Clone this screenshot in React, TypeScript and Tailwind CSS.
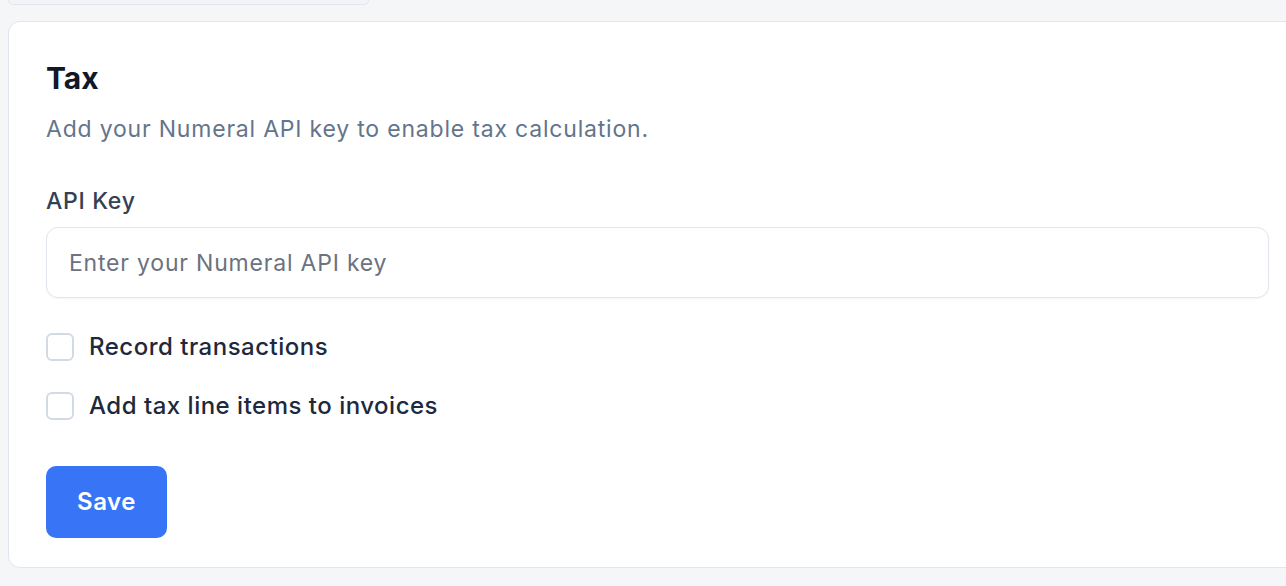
import React from "react";

export default function App() {
  return (
    <div
      className="w-[1286px] h-[586px] overflow-hidden bg-[#f5f6f8]"
      style={{ fontFamily: "Inter, 'Noto Sans', sans-serif" }}
    >
      <div className="ml-[8px] w-[361px] h-[5px] rounded-b-[10px] border-x border-b border-[#e1e5ed] bg-[#f3f4f7]" />
      <div className="ml-[8px] mt-[16px] w-[1300px] rounded-[12px] border border-[#e1e5ed] bg-white pl-[37px] pt-[38px] pb-[29px]">
        <h2 className="text-[30px] leading-[36px] font-bold text-[#111827] tracking-[0px]">Tax</h2>
        <p className="mt-[18px] text-[23px] leading-[30px] text-[#64748b] tracking-[0.8px]">
          Add your Numeral API key to enable tax calculation.
        </p>
        <label className="block mt-[42px] text-[23px] leading-[30px] text-[#334155] font-medium tracking-[0.7px]">
          API Key
        </label>
        <input
          className="mt-[11px] block w-[1223px] h-[71px] rounded-[12px] border border-[#e1e5ed] bg-white pl-[22px] text-[23px] text-[#1e293b] tracking-[0.8px] outline-none placeholder:text-[#6b7280] shadow-[0_1px_2px_rgba(16,24,40,0.04)]"
          placeholder="Enter your Numeral API key"
        />
        <div className="mt-[34px] flex flex-col gap-[29px]">
          <label className="flex items-center gap-[15px] h-[30px]">
            <span className="w-[28px] h-[28px] rounded-[6px] border-2 border-[#d3dae6] bg-white" />
            <span className="text-[24px] font-medium text-[#1e293b] tracking-[0.5px]">Record transactions</span>
          </label>
          <label className="flex items-center gap-[15px] h-[30px]">
            <span className="w-[28px] h-[28px] rounded-[6px] border-2 border-[#d3dae6] bg-white" />
            <span className="text-[24px] font-medium text-[#1e293b] tracking-[0.5px]">Add tax line items to invoices</span>
          </label>
        </div>
        <button className="mt-[45px] w-[121px] h-[72px] rounded-[10px] bg-[#3874f6] text-white text-[24px] font-semibold tracking-[0.5px]">
          Save
        </button>
      </div>
    </div>
  );
}
